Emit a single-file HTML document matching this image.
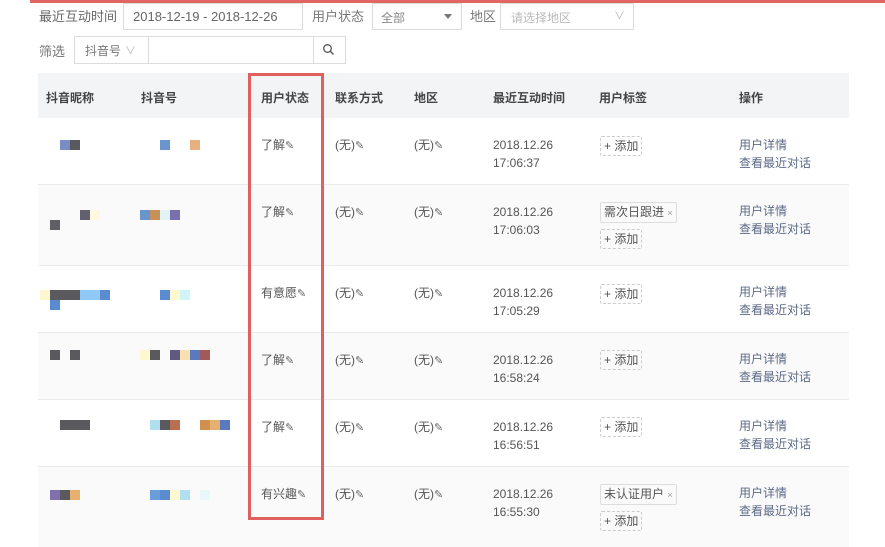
<!DOCTYPE html>
<html><head><meta charset="utf-8"><style>
*{margin:0;padding:0;box-sizing:border-box}
body{width:885px;height:543px;overflow:hidden;background:#fff;font-family:"Liberation Sans","Noto Sans CJK SC",sans-serif;font-size:12px;color:#555;position:relative}
.a{position:absolute;white-space:nowrap}
.box{position:absolute;border:1px solid #dcdcdc;background:#fff}
.b{position:absolute;width:10px;height:10px}
.row{position:absolute;left:38px;width:811px;border-bottom:1px solid #ebebeb}
.hd{font-weight:bold;color:#444;font-size:12px}
.tag{position:absolute;border:1px dashed #ccc;border-radius:2px;padding:0 3px;height:20px;line-height:18px;font-size:12px;color:#555}
.tag2{position:absolute;border:1px solid #ddd;border-radius:2px;padding:0 3px;height:21px;line-height:19px;background:#fafafa;color:#555}
.lk{color:#5d6a86}
.pen{font-size:11px;color:#666}
.t{margin-top:-2px}
</style></head><body>
<div class="a" style="left:30px;top:0;width:855px;height:3px;background:#e36464"></div>
<div class="a" style="left:39px;top:6px;font-size:13px;color:#666">最近互动时间</div>
<div class="box" style="left:123px;top:3px;width:180px;height:27px"></div>
<div class="a" style="left:133px;top:9px;font-size:13px;color:#666">2018-12-19 - 2018-12-26</div>
<div class="a" style="left:312px;top:6px;font-size:13px;color:#777">用户状态</div>
<div class="box" style="left:372px;top:3px;width:90px;height:27px"></div>
<div class="a" style="left:381px;top:9px;font-size:12px;color:#888">全部</div>
<div class="a" style="left:444px;top:14px;width:0;height:0;border:4px solid transparent;border-top:5px solid #777"></div>
<div class="a" style="left:470px;top:6px;font-size:13px;color:#777">地区</div>
<div class="box" style="left:500px;top:3px;width:134px;height:27px"></div>
<div class="a" style="left:511px;top:9px;font-size:12px;color:#bbb">请选择地区</div>
<div class="a" style="left:614px;top:7px;font-size:11px;color:#bbb">∨</div>

<div class="a" style="left:39px;top:41px;font-size:13px;color:#777">筛选</div>
<div class="box" style="left:74px;top:36px;width:272px;height:28px"></div>
<div class="a" style="left:148px;top:37px;width:1px;height:26px;background:#dcdcdc"></div>
<div class="a" style="left:313px;top:37px;width:1px;height:26px;background:#dcdcdc"></div>
<div class="a" style="left:85px;top:42px;font-size:12px;color:#777">抖音号</div>
<div class="a" style="left:125px;top:42px;font-size:11px;color:#bbb">∨</div>
<svg class="a" style="left:322px;top:43px" width="13" height="13" viewBox="0 0 13 13"><circle cx="5.5" cy="5.5" r="3.8" fill="none" stroke="#555" stroke-width="1.3"/><path d="M8.3 8.3L11.5 11.5" stroke="#555" stroke-width="1.4"/></svg>

<div class="a" style="left:38px;top:73px;width:811px;height:45px;background:#f3f4f6"></div>
<div class="a hd" style="left:46px;top:89px">抖音昵称</div>
<div class="a hd" style="left:141px;top:89px">抖音号</div>
<div class="a hd" style="left:261px;top:89px">用户状态</div>
<div class="a hd" style="left:335px;top:89px">联系方式</div>
<div class="a hd" style="left:414px;top:89px">地区</div>
<div class="a hd" style="left:493px;top:89px">最近互动时间</div>
<div class="a hd" style="left:599px;top:89px">用户标签</div>
<div class="a hd" style="left:739px;top:89px">操作</div>

<div class="row" style="top:118px;height:67px;background:#fff"></div>
<div class="row" style="top:185px;height:81px;background:#fafafb"></div>
<div class="row" style="top:266px;height:67px;background:#fff"></div>
<div class="row" style="top:333px;height:67px;background:#fafafb"></div>
<div class="row" style="top:400px;height:67px;background:#fff"></div>
<div class="row" style="top:467px;height:80px;background:#fafafb;border:none"></div>

<div class="a" style="left:261px;top:136px">了解<span class="pen">✎</span></div>
<div class="a" style="left:261px;top:203px">了解<span class="pen">✎</span></div>
<div class="a" style="left:261px;top:284px">有意愿<span class="pen">✎</span></div>
<div class="a" style="left:261px;top:351px">了解<span class="pen">✎</span></div>
<div class="a" style="left:261px;top:418px">了解<span class="pen">✎</span></div>
<div class="a" style="left:261px;top:485px">有兴趣<span class="pen">✎</span></div>

<div class="a" style="left:335px;top:136px">(无)<span class="pen">✎</span></div>
<div class="a" style="left:414px;top:136px">(无)<span class="pen">✎</span></div>
<div class="a" style="left:335px;top:203px">(无)<span class="pen">✎</span></div>
<div class="a" style="left:414px;top:203px">(无)<span class="pen">✎</span></div>
<div class="a" style="left:335px;top:284px">(无)<span class="pen">✎</span></div>
<div class="a" style="left:414px;top:284px">(无)<span class="pen">✎</span></div>
<div class="a" style="left:335px;top:351px">(无)<span class="pen">✎</span></div>
<div class="a" style="left:414px;top:351px">(无)<span class="pen">✎</span></div>
<div class="a" style="left:335px;top:418px">(无)<span class="pen">✎</span></div>
<div class="a" style="left:414px;top:418px">(无)<span class="pen">✎</span></div>
<div class="a" style="left:335px;top:485px">(无)<span class="pen">✎</span></div>
<div class="a" style="left:414px;top:485px">(无)<span class="pen">✎</span></div>

<div class="a" style="left:493px;top:136px;line-height:18px">2018.12.26<br>17:06:37</div>
<div class="a" style="left:493px;top:203px;line-height:18px">2018.12.26<br>17:06:03</div>
<div class="a" style="left:493px;top:284px;line-height:18px">2018.12.26<br>17:05:29</div>
<div class="a" style="left:493px;top:351px;line-height:18px">2018.12.26<br>16:58:24</div>
<div class="a" style="left:493px;top:418px;line-height:18px">2018.12.26<br>16:56:51</div>
<div class="a" style="left:493px;top:485px;line-height:18px">2018.12.26<br>16:55:30</div>

<div class="tag" style="left:600px;top:136px">+ 添加</div>
<div class="tag2" style="left:600px;top:202px">需次日跟进 <span style="font-size:9px;color:#999">×</span></div>
<div class="tag" style="left:600px;top:229px">+ 添加</div>
<div class="tag" style="left:600px;top:284px">+ 添加</div>
<div class="tag" style="left:600px;top:350px">+ 添加</div>
<div class="tag" style="left:600px;top:417px">+ 添加</div>
<div class="tag2" style="left:600px;top:484px">未认证用户 <span style="font-size:9px;color:#999">×</span></div>
<div class="tag" style="left:600px;top:511px">+ 添加</div>

<div class="a lk" style="left:739px;top:136px;line-height:18px">用户详情<br>查看最近对话</div>
<div class="a lk" style="left:739px;top:202px;line-height:18px">用户详情<br>查看最近对话</div>
<div class="a lk" style="left:739px;top:283px;line-height:18px">用户详情<br>查看最近对话</div>
<div class="a lk" style="left:739px;top:350px;line-height:18px">用户详情<br>查看最近对话</div>
<div class="a lk" style="left:739px;top:417px;line-height:18px">用户详情<br>查看最近对话</div>
<div class="a lk" style="left:739px;top:484px;line-height:18px">用户详情<br>查看最近对话</div>

<div class="b" style="left:60px;top:140px;background:#7a8cc4"></div><div class="b" style="left:70px;top:140px;background:#5a5a5e"></div>
<div class="b" style="left:160px;top:140px;background:#6a94cc"></div><div class="b" style="left:190px;top:140px;background:#e6b080"></div>
<div class="b" style="left:50px;top:220px;background:#606064"></div><div class="b" style="left:80px;top:210px;background:#606070"></div><div class="b" style="left:90px;top:210px;background:#fdf8e0"></div>
<div class="b" style="left:140px;top:210px;background:#6a94cc"></div><div class="b" style="left:150px;top:210px;background:#c8905a"></div><div class="b" style="left:160px;top:210px;background:#e0f4f4"></div><div class="b" style="left:170px;top:210px;background:#7a70b0"></div>
<div class="b" style="left:40px;top:290px;background:#fdf8d0"></div><div class="b" style="left:50px;top:290px;width:30px;background:#5a5a5e"></div><div class="b" style="left:80px;top:290px;width:20px;background:#90c8f8"></div><div class="b" style="left:100px;top:290px;background:#5a8ad0"></div><div class="b" style="left:50px;top:300px;background:#5a8ad0"></div>
<div class="b" style="left:160px;top:290px;background:#5a8ad0"></div><div class="b" style="left:170px;top:290px;background:#fdf8d0"></div><div class="b" style="left:180px;top:290px;background:#d0f4fa"></div>
<div class="b" style="left:50px;top:350px;background:#5a5a5e"></div><div class="b" style="left:70px;top:350px;background:#5a5a5e"></div>
<div class="b" style="left:140px;top:350px;background:#fdf8d0"></div><div class="b" style="left:150px;top:350px;background:#5a5a5e"></div><div class="b" style="left:170px;top:350px;background:#605a80"></div><div class="b" style="left:180px;top:350px;background:#f8e0b0"></div><div class="b" style="left:190px;top:350px;background:#5a7ac0"></div><div class="b" style="left:200px;top:350px;background:#a05a5a"></div>
<div class="b" style="left:60px;top:420px;width:30px;background:#5a5a5e"></div>
<div class="b" style="left:150px;top:420px;background:#b0e0f0"></div><div class="b" style="left:160px;top:420px;background:#5a5a5e"></div><div class="b" style="left:170px;top:420px;background:#b87050"></div><div class="b" style="left:200px;top:420px;background:#d09050"></div><div class="b" style="left:210px;top:420px;background:#e8b070"></div><div class="b" style="left:220px;top:420px;background:#5a7ac0"></div>
<div class="b" style="left:50px;top:490px;background:#8070b0"></div><div class="b" style="left:60px;top:490px;background:#5a5a5e"></div><div class="b" style="left:70px;top:490px;background:#e8b070"></div>
<div class="b" style="left:150px;top:490px;background:#6a9ed8"></div><div class="b" style="left:160px;top:490px;background:#5a8ad0"></div><div class="b" style="left:170px;top:490px;background:#fdf8d0"></div><div class="b" style="left:180px;top:490px;background:#b0e0f0"></div><div class="b" style="left:200px;top:490px;background:#e8f8f8"></div>

<div class="a" style="left:248px;top:73px;width:76px;height:447px;border:3px solid #e06060"></div>
</body></html>
